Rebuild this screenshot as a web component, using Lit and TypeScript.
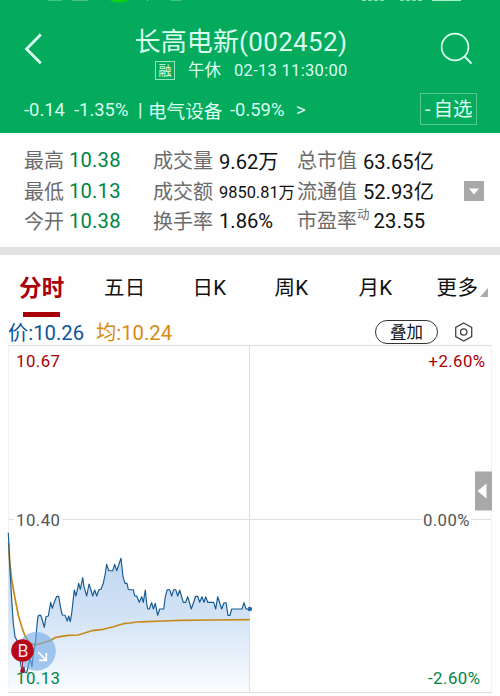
import { LitElement, html, css, svg } from "lit";
import { customElement } from "lit/decorators.js";
import { classMap } from "lit/directives/class-map.js";

type Pt = [number, number];

const early: Pt[] = [
  [25, 38], [30, 150], [35, 240], [40, 310], [45, 350], [50, 360], [55, 385], [60, 420], [66, 455], [72, 440],
  [75, 458], [80, 458], [88, 425], [91, 418], [96, 440], [100, 400], [105, 375], [107, 360], [110, 325], [113, 295],
  [116, 286], [122, 286], [127, 300], [133, 322], [138, 290], [145, 288], [152, 247], [157, 265], [163, 247], [170, 229],
  [176, 229], [182, 265], [187, 285], [195, 286], [202, 303], [206, 288], [211, 305], [215, 280], [219, 245], [223, 210],
  [228, 228], [236, 190], [241, 208], [248, 173], [252, 200], [260, 228], [267, 192], [272, 208], [278, 228], [284, 210],
  [290, 228], [296, 210], [303, 208], [310, 190], [315, 165], [320, 133], [326, 152], [338, 152], [344, 133], [350, 152],
  [356, 135], [363, 115], [369, 170], [375, 190], [381, 190], [385, 208],
];
const late: Pt[] = [
  [0, 149], [10, 149], [14, 168], [20, 168], [28, 187], [35, 170], [40, 187], [46, 150], [50, 190], [53, 207],
  [58, 207], [65, 188], [70, 207], [76, 190], [83, 226], [89, 207], [101, 207], [106, 170], [112, 149], [119, 149],
  [125, 168], [131, 149], [137, 149], [143, 168], [149, 150], [160, 187], [167, 187], [173, 170], [184, 207], [197, 169],
  [203, 169], [209, 187], [216, 170], [222, 187], [227, 170], [233, 187], [251, 187], [257, 207], [263, 170], [275, 207],
  [282, 188], [288, 188], [294, 226], [300, 226], [305, 207], [336, 207], [342, 188], [348, 207], [359, 207],
];
const avgEarly: Pt[] = [
  [26, 70], [29, 125], [35, 180], [45, 235], [55, 285], [65, 320], [75, 348], [90, 370], [105, 375], [130, 368], [150, 362],
  [165, 353], [180, 350], [205, 346], [235, 345], [275, 332], [310, 328], [340, 320], [370, 311],
];
const avgLate: Pt[] = [[0, 249], [20, 246], [50, 245], [100, 243], [150, 241], [250, 240], [359, 239]];

const place = (pts: Pt[], ox: number, oy: number) =>
  pts.map(([x, y]) => `${(ox + x / 3).toFixed(1)},${(oy + y / 3).toFixed(1)}`);
const price = [...place(early, 0, 520), ...place(late, 130, 540)].join(" ");
const average = [...place(avgEarly, 0, 520), ...place(avgLate, 130, 540)].join(" ");

@customElement("minute-chart")
export class MinuteChart extends LitElement {
  static styles = css`
    :host { display: block; height: 351px; }
    svg { display: block; font-family: Roboto, "Noto Sans CJK SC", sans-serif; }
    .grid { stroke: #dedede; stroke-width: 1; fill: none; }
    .faint { stroke: #f1f1f1; }
    .price { fill: none; stroke: #155a90; stroke-width: 1.15; stroke-linejoin: round; }
    .avg { fill: none; stroke: #c68a1b; stroke-width: 1.7; stroke-linejoin: round; }
    .label { font-size: 16.8px; }
    .up { fill: #a80008; }
    .mid { fill: #555; }
    .down { fill: #008446; }
    .b { font-size: 18px; fill: #f7dfe2; }
  `;
  render() {
    return html`<svg width="500" height="351" viewBox="0 345 500 351">
      ${svg`
      <defs>
        <linearGradient id="area" gradientUnits="userSpaceOnUse" x1="0" y1="555" x2="0" y2="692">
          <stop offset="0" stop-color="#bed6f1" />
          <stop offset="0.45" stop-color="#d3e3f6" />
          <stop offset="1" stop-color="#fbfdff" />
        </linearGradient>
      </defs>
      <path class="grid" d="M8 345.5H492M249.5 346V692M8 692.5H492" />
      <path class="grid" d="M8 519.5H14M62 519.5H422M471 519.5H492" />
      <path class="grid faint" d="M8.5 346V692M491.5 346V692" />
      <polygon points="${price} 249.6,692 8.5,692" fill="url(#area)" />
      <path class="grid" d="M249.5 600V692" />
      <polyline class="avg" points=${average} />
      <polyline class="price" points=${price} />
      <circle cx="249.8" cy="609" r="2.3" fill="#2468b4" />
      <circle cx="36.5" cy="651.3" r="19.3" fill="#72a9e3" fill-opacity="0.62" />
      <path d="M27.5 641.5L33.5 647.5" stroke="#fff" stroke-width="1.6" />
      <path d="M38 652L46 660M46.3 653V660.3H39" fill="none" stroke="#fff" stroke-width="1.7" />
      <path d="M22.5 655V671" stroke="#b4283a" stroke-width="1" />
      <circle cx="22.5" cy="671" r="2.3" fill="#a5121f" />
      <circle cx="22.5" cy="650.5" r="11.3" fill="#b9071a" />
      <text class="b" x="17.6" y="656.8" textLength="11" lengthAdjust="spacingAndGlyphs">B</text>
      <text class="label up" x="16" y="367" textLength="44">10.67</text>
      <text class="label mid" x="16" y="526" textLength="44">10.40</text>
      <text class="label down" x="16" y="684.4" textLength="44">10.13</text>
      <text class="label up" x="428.5" y="367" textLength="56.5">+2.60%</text>
      <text class="label mid" x="423" y="526" textLength="46.5">0.00%</text>
      <text class="label down" x="428" y="684.4" textLength="52">-2.60%</text>
      <rect x="475" y="471.5" width="17" height="39" fill="#a8a8a8" />
      <path d="M477.5 491L486.5 483.5V498.5Z" fill="#fff" />`}
    </svg>`;
  }
}

@customElement("app-root")
export class AppRoot extends LitElement {
  static styles = css`
    :host {
      display: block; width: 500px; height: 696px; overflow: hidden; background: #fefefe;
      font-family: Roboto, "Noto Sans CJK SC", sans-serif; color: #111; white-space: nowrap;
    }
    svg { display: block; }
    .header { height: 133px; background: #04ab5c; color: #d8fff0; overflow: hidden; }
    .status { height: 4px; }
    .top { display: grid; grid-template-columns: 80px 322px 98px; height: 83px; }
    .back { padding: 29px 0 0 23px; }
    .search { padding: 28px 0 0 38px; }
    .titles { padding-top: 20px; }
    .title { font-size: 26px; line-height: 37px; height: 36px; text-align: center; letter-spacing: 0.1px; }
    .code { letter-spacing: 0.35px; }
    .sub { display: grid; grid-template-columns: 33px 46px auto; padding-left: 75px; align-items: center; height: 21px; font-size: 16.5px; line-height: 21px; }
    .time { letter-spacing: 0.3px; }
    .badge { width: 18px; height: 17px; border: 1px solid #8fe6bf; font-size: 13px; line-height: 17px; text-align: center; }
    .quote { display: grid; grid-template-columns: 50px 64px 10px 82px 66px 124px 61px; padding-left: 24px; align-items: center; height: 44px; font-size: 18.4px; }
    .quote .industry { font-size: 18.6px; }
    .favorite { box-sizing: border-box; width: 57px; height: 32px; border: 1px solid #55c98f; font-size: 19.5px; line-height: 31px; display: flex; padding-left: 4px; gap: 3px; }
    .stats { display: grid; grid-template-columns: 45px 84px 66px 78px 66px 101px auto; grid-auto-rows: 30.5px; padding: 12px 0 0 24px; height: 102px; align-items: center; font-size: 20.2px; }
    .name { color: #6b6b6b; font-size: 20px; margin-top: -1px; }
    .stats .fall { color: #008446; letter-spacing: 0.2px; }
    .stats .small { font-size: 16.4px; }
    .pe { display: flex; line-height: 24px; }
    .mark { font-size: 12.5px; line-height: 12px; }
    .shift { padding-left: 10.5px; letter-spacing: 0.25px; }
    .band { height: 8px; background: #e2e2e2; }
    .tabs { display: grid; grid-template-columns: 85px 88.5px 82px 84px 78px auto; padding-left: 19px; height: 62px; font-size: 20.5px; line-height: 66px; }
    .tab { height: 62px; letter-spacing: 0.2px; }
    .active { color: #a80008; font-weight: 700; font-size: 22.5px; }
    .active::after { content: ""; display: block; width: 37px; height: 5px; margin: -9px 0 0 4px; background: #a80008; }
    .more { display: flex; gap: 1px; letter-spacing: 0.5px; }
    .more svg { margin-top: 33px; }
    .legend { display: grid; grid-template-columns: 88px 279px 79px auto; padding-left: 8px; height: 28px; font-size: 20.3px; line-height: 33px; }
    .now { color: #0c549c; }
    .mean { color: #d98a12; }
    .pill { box-sizing: border-box; width: 63px; height: 24px; margin-top: 3px; border: 1.3px solid #333; border-radius: 12px; font-size: 16.5px; line-height: 24px; text-align: center; }
    .hex { margin-top: 5px; }
  `;

  private tabs = ["分时", "五日", "日K", "周K", "月K"];

  render() {
    return html`
      <div class="header">
        <svg class="status" width="500" height="4" viewBox="0 0 500 4">
          <path d="M48 .2H62M72 .2H88M171 .2H181" stroke="#79d8a9" stroke-width="0.8" fill="none" />
          <path d="M147.5 0V1" stroke="#79d8a9" />
          <path d="M110 0H128Q125 2.6 119 2.6T110 0Z" fill="#10cf16" />
          <path d="M362 .3H384M400 .3H422" stroke="#a8f0ce" stroke-dasharray="4 2" />
          <path d="M432 .4H461" stroke="#b9f7d9" />
        </svg>
        <div class="top">
          <svg class="back" width="20" height="32" viewBox="0 0 20 32"><path d="M17.8 1.5L3.5 16L17.8 30.2" fill="none" stroke="#d8fff0" stroke-width="2.8" /></svg>
          <div class="titles">
            <div class="title">长高电新<span class="code">(002452)</span></div>
            <div class="sub"><span class="badge">融</span><span>午休</span><span class="time">02-13 11:30:00</span></div>
          </div>
          <svg class="search" width="34" height="34" viewBox="0 0 34 34"><circle cx="15" cy="15" r="13.4" fill="none" stroke="#d8fff0" stroke-width="1.7" /><path d="M24.2 24.2L31.5 31.5" stroke="#d8fff0" stroke-width="1.9" /></svg>
        </div>
        <div class="quote">
          <span>-0.14</span><span>-1.35%</span><span>|</span><span class="industry">电气设备</span><span>-0.59%</span><span>&gt;</span>
          <span class="favorite"><span>-</span><span>自选</span></span>
        </div>
      </div>
      <div class="stats">
        <span class="name">最高</span><span class="fall">10.38</span><span class="name">成交量</span><span>9.62万</span><span class="name">总市值</span><span>63.65亿</span><span></span>
        <span class="name">最低</span><span class="fall">10.13</span><span class="name">成交额</span><span class="small">9850.81万</span><span class="name">流通值</span><span>52.93亿</span>
        <svg width="20" height="20" viewBox="0 0 20 20"><rect width="20" height="20" fill="#a8a8a8" /><path d="M5 7.5H15L10 13.5Z" fill="#fff" /></svg>
        <span class="name">今开</span><span class="fall">10.38</span><span class="name">换手率</span><span>1.86%</span><span class="name pe">市盈率<span class="mark">动</span></span><span class="shift">23.55</span><span></span>
      </div>
      <div></div>
      <div class="band"></div>
      <div class="tabs">
        ${this.tabs.map((t, i) => html`<div class=${classMap({ tab: true, active: i === 0 })}>${t}</div>`)}
        <div class="tab more">更多<svg width="8" height="9" viewBox="0 0 8 9"><path d="M8 0V9H0Z" fill="#aaa" /></svg></div>
      </div>
      <div class="legend">
        <span class="now">价:10.26</span><span class="mean">均:10.24</span><span class="pill">叠加</span>
        <svg class="hex" width="20" height="20" viewBox="0 0 20 20"><path d="M9.7 1L17.7 5.4V14.6L9.7 19L1.7 14.6V5.4Z" fill="none" stroke="#444" stroke-width="1.3" /><circle cx="9.7" cy="10" r="3.2" fill="none" stroke="#444" stroke-width="1.3" /></svg>
      </div>
      <minute-chart></minute-chart>
    `;
  }
}
